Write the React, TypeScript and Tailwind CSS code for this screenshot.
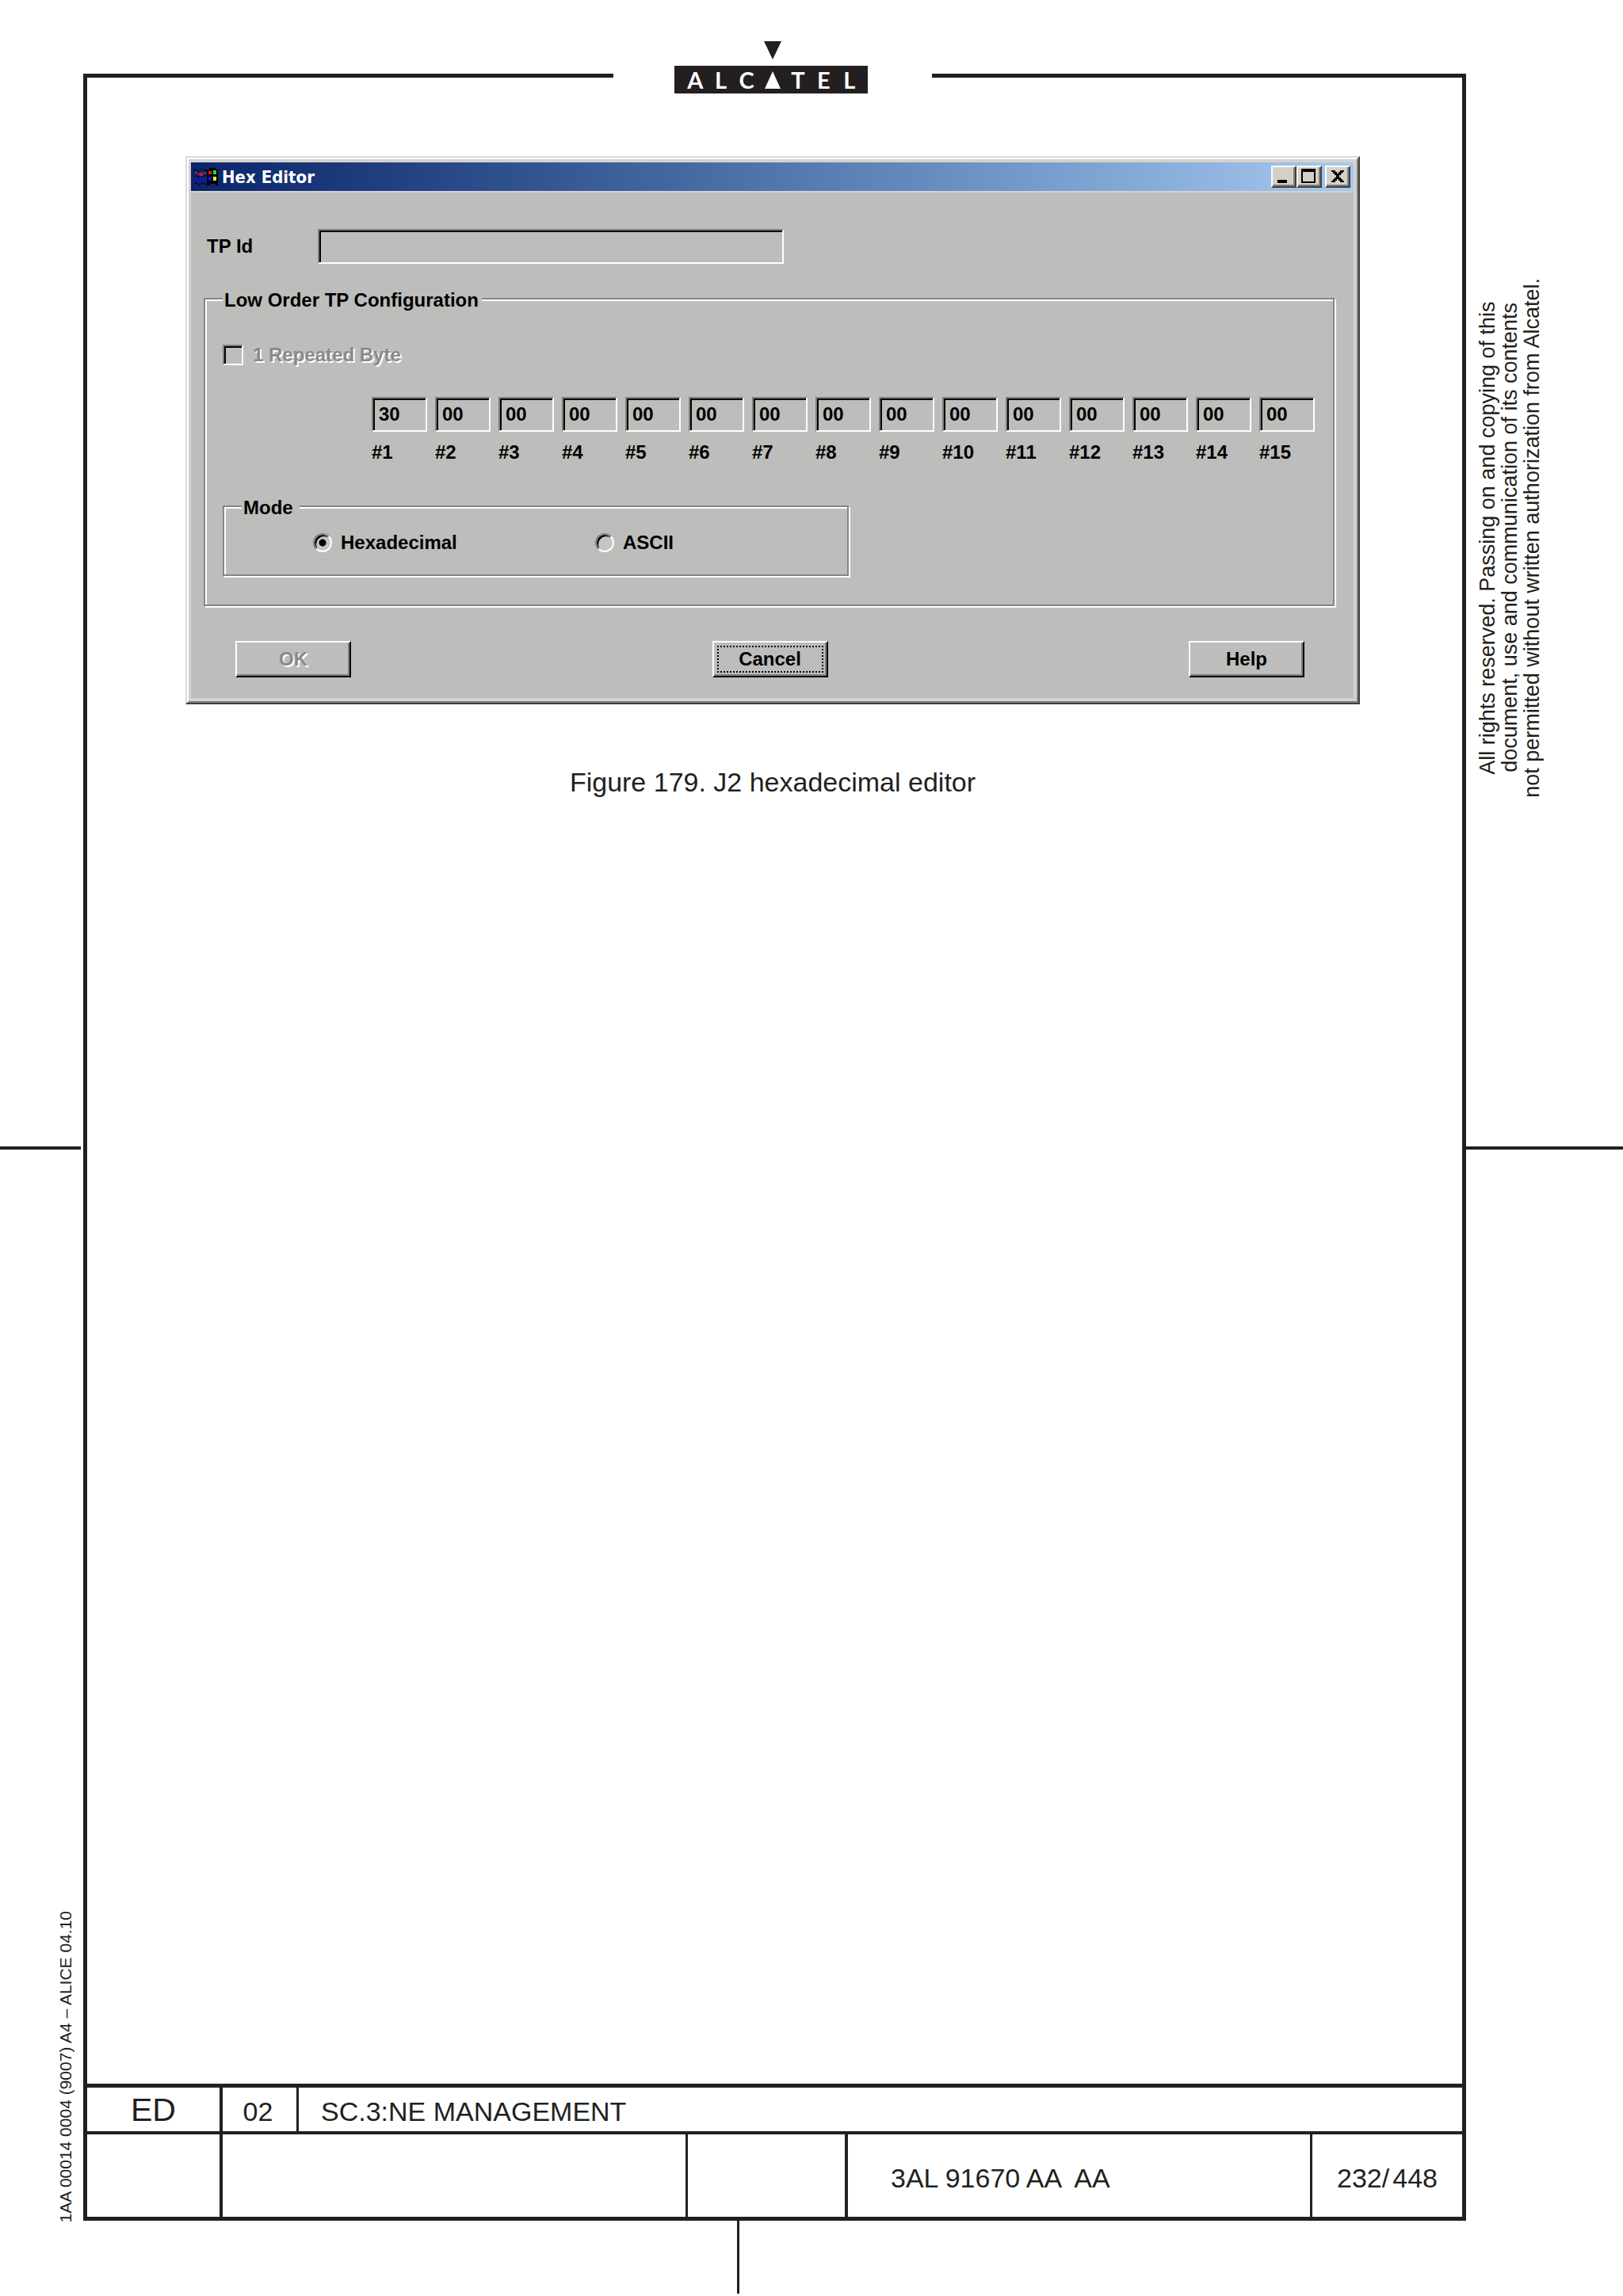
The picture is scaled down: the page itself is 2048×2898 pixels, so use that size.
import { useState } from "react";
import type { ReactNode } from "react";

const initialBytes = ["30", ...Array(14).fill("00")] as string[];

const sunken =
  "border-2 border-t-[#808080] border-l-[#808080] border-r-white border-b-white shadow-[inset_2px_2px_0_#000] bg-transparent";
const group =
  "border-2 border-[#868686] shadow-[2px_2px_0_#fff,inset_2px_2px_0_#fff]";
const engraved = "text-[#8a8a8a] [text-shadow:2px_2px_0_#fff]";

function Logo() {
  return (
    <div className="flex flex-col items-center pt-[52px]">
      <svg width="22" height="23" viewBox="0 0 22 23" className="ml-1">
        <path d="M0 0H22L11 23Z" fill="#231f20" />
      </svg>
      <div className="mt-2 grid h-[35px] w-[244px] grid-cols-7 items-center justify-items-center bg-[#231f20] pr-[7px] pl-[10px] font-[Lato,sans-serif] text-[29px] leading-[35px] font-bold text-white">
        <span>A</span>
        <span>L</span>
        <span>C</span>
        <svg width="20" height="22" viewBox="0 0 20 22">
          <path d="M10 0L20 22H0Z" fill="#fff" />
        </svg>
        <span>T</span>
        <span>E</span>
        <span>L</span>
      </div>
    </div>
  );
}

function WindowsFlag() {
  return (
    <svg width="32" height="26" viewBox="0 0 32 26" shapeRendering="crispEdges">
      <path d="M17 4h3V2h8v2h3v20h-3v-2h-7v2h-4z" fill="#000" />
      <path d="M19 6h4v4h-4z" fill="#f01818" />
      <path d="M25 5h4v5h-4z" fill="#20e020" />
      <path d="M19 13h4v5h-4z" fill="#1010f0" />
      <path d="M25 13h4v5h-4z" fill="#f8e820" />
      <path
        d="M1 3h2v2H1zM5 5h2v2H5zM9 3h2v2H9zM13 4h3v3h-3zM1 11h2v2H1zM5 12h3v2H5zM10 12h2v2h-2zM14 11h2v2h-2z"
        fill="#08081c"
      />
      <path d="M2 7h3v2H2zM6 9h2v2H6zM8 8h4v4H8zM13 7h3v2h-3z" fill="#c81838" />
      <path d="M1 15h4v2H1zM5 16h4v3H5zM9 17h4v2H9zM12 15h4v3h-4z" fill="#0c0cd8" />
      <path d="M2 20h3v2H2zM7 22h2v2H7zM10 20h2v2h-2zM13 21h3v2h-3z" fill="#08081c" />
    </svg>
  );
}

function TitleButton({ label, children }: { label: string; children: ReactNode }) {
  return (
    <button
      type="button"
      aria-label={label}
      className="flex h-7 w-8 items-center justify-center border-2 border-t-white border-l-white border-r-[#404040] border-b-[#404040] bg-[#d4d0c8] shadow-[inset_-2px_-2px_0_#808080]"
    >
      <svg width="24" height="20" viewBox="0 0 24 20" shapeRendering="crispEdges">
        {children}
      </svg>
    </button>
  );
}

function DialogButton({
  children,
  disabled,
  focused,
}: {
  children: ReactNode;
  disabled?: boolean;
  focused?: boolean;
}) {
  return (
    <button
      type="button"
      disabled={disabled}
      className={`flex h-[46px] w-[146px] border-2 border-t-white border-l-white border-r-black border-b-black p-1 shadow-[inset_-2px_-2px_0_#808080] ${
        disabled ? engraved : ""
      }`}
    >
      <span
        className={`flex h-full w-full items-center justify-center ${
          focused ? "border-2 border-dotted border-black" : ""
        }`}
      >
        {children}
      </span>
    </button>
  );
}

function HexEditor() {
  const [bytes, setBytes] = useState(initialBytes);
  const [mode, setMode] = useState("Hexadecimal");

  const setByte = (index: number, value: string) => {
    setBytes(bytes.map((b, i) => (i === index ? value : b)));
  };

  return (
    <div className="border-2 border-t-[#dcdad6] border-l-[#dcdad6] border-r-[#404040] border-b-[#404040]">
      <div className="border-2 border-t-white border-l-white border-r-[#808080] border-b-[#808080] bg-[#d4d2ce] p-1 pl-[3px]">
        <div className="flex h-9 items-center bg-linear-to-r from-[#0a246a] to-[#a6caf0] pr-1 pl-[3px]">
          <WindowsFlag />
          <span className="flex-1 pt-[2px] pl-1 font-['DejaVu_Sans_Condensed','DejaVu_Sans',sans-serif] text-[22px] leading-6 font-bold text-white">
            Hex Editor
          </span>
          <TitleButton label="Minimize">
            <path d="M4 14h12v4H4z" />
          </TitleButton>
          <TitleButton label="Maximize">
            <path d="M2 0h18v18H2zM4 4v12h14V4z" fillRule="evenodd" />
          </TitleButton>
          <span className="w-1" />
          <TitleButton label="Close">
            <path d="M4 2h5v2h2v2h2V4h2V2h5v2h-2v2h-2v2h-2v3h2v2h2v2h2v2h-5v-2h-2v-2h-2v2H9v2H4v-2h2v-2h2v-2h2V8H8V6H6V4H4z" />
          </TitleButton>
        </div>

        <form className="mt-[2px] bg-[#bdbdbb] pr-6 pb-[26px] pl-4 text-[24px] leading-7 font-bold">
          <div className="flex items-center pt-[46px] pl-1">
            <label htmlFor="tp-id" className="w-[140px]">
              TP Id
            </label>
            <input id="tp-id" type="text" className={`h-11 w-[588px] px-2 ${sunken}`} />
          </div>

          <fieldset className={`mt-7 pr-[23px] pb-9 pl-[22px] ${group}`}>
            <legend className="bg-[#bdbdbb] pt-1 pr-1 pl-[2px]">
              Low Order TP Configuration
            </legend>
            <div className="mt-[41px] flex items-center gap-3">
              <input
                id="repeated"
                type="checkbox"
                disabled
                className={`size-[26px] appearance-none ${sunken}`}
              />
              <label htmlFor="repeated" className={engraved}>
                1 Repeated Byte
              </label>
            </div>

            <div className="mt-[39px] flex justify-end gap-[10px]">
              {bytes.map((value, i) => (
                <div key={i} className="flex w-[70px] flex-col gap-3">
                  <input
                    id={`byte-${i + 1}`}
                    type="text"
                    maxLength={2}
                    value={value}
                    onChange={(e) => setByte(i, e.target.value)}
                    className={`h-11 w-full px-[7px] ${sunken}`}
                  />
                  <label htmlFor={`byte-${i + 1}`}>#{i + 1}</label>
                </div>
              ))}
            </div>

            <fieldset className={`mt-[38px] w-[790px] pb-[26px] pl-[112px] ${group}`}>
              <legend className="-ml-[90px] bg-[#bdbdbb] pt-1 pr-2 pl-[2px]">Mode</legend>
              <div className="mt-4 flex">
                {["Hexadecimal", "ASCII"].map((name) => (
                  <label key={name} className="flex w-[356px] items-center gap-[11px] last:w-auto">
                    <input
                      type="radio"
                      name="mode"
                      value={name}
                      checked={mode === name}
                      onChange={() => setMode(name)}
                      className="size-6 appearance-none rounded-full border-2 border-t-[#808080] border-l-[#808080] border-r-white border-b-white bg-[#c6c6c4] shadow-[inset_2px_2px_0_#000] checked:bg-[radial-gradient(circle,#000_4px,transparent_5px)]"
                    />
                    {name}
                  </label>
                ))}
              </div>
            </fieldset>
          </fieldset>

          <div className="mt-11 flex justify-between pr-[38px] pl-10">
            <DialogButton disabled>OK</DialogButton>
            <DialogButton focused>Cancel</DialogButton>
            <DialogButton>Help</DialogButton>
          </div>
        </form>
      </div>
    </div>
  );
}

function TitleBlock() {
  return (
    <div className="border-y-5 border-[#231f20] text-[34px] leading-[38px]">
      <div className="flex h-[59px] border-b-4 border-[#231f20]">
        <div className="flex w-[171px] items-center justify-center border-r-4 border-[#231f20] text-[41px]">
          ED
        </div>
        <div className="flex w-24 items-center justify-center border-r-3 border-[#231f20] pt-1 pr-1">
          02
        </div>
        <div className="flex flex-1 items-center pt-1 pl-7">SC.3:NE MANAGEMENT</div>
      </div>
      <div className="flex h-[104px]">
        <div className="w-[171px] border-r-4 border-[#231f20]" />
        <div className="flex-1 border-r-3 border-[#231f20]" />
        <div className="w-[202px] border-r-4 border-[#231f20]" />
        <div className="flex w-[586px] items-center border-r-3 border-[#231f20] pt-[6px] pl-[54px] whitespace-pre">
          3AL 91670 AA  AA
        </div>
        <div className="flex w-[189px] items-center justify-center gap-1 pt-[6px]">
          <span>232/</span>
          <span>448</span>
        </div>
      </div>
    </div>
  );
}

export default function App() {
  return (
    <div className="flex min-h-screen bg-white font-['Liberation_Sans',Arial,sans-serif] text-[#231f20]">
      <aside className="flex w-[105px] flex-col">
        <div className="flex-1" />
        <div className="mr-[3px] h-1 bg-[#231f20]" />
        <div className="flex flex-1 items-end justify-end">
          <p className="mr-[10px] mb-[93px] rotate-180 text-[21px] leading-6 whitespace-nowrap [writing-mode:vertical-rl]">
            1AA 00014 0004 (9007) A4 – ALICE 04.10
          </p>
        </div>
      </aside>

      <main className="flex flex-1 flex-col">
        <header className="flex">
          <div className="mt-[93px] flex-[669] border-t-5 border-l-5 border-[#231f20]" />
          <div className="pr-[81px] pl-[77px]">
            <Logo />
          </div>
          <div className="mt-[93px] flex-[674] border-t-5 border-r-5 border-[#231f20]" />
        </header>
        <div className="flex flex-1 flex-col border-x-5 border-[#231f20]">
          <figure className="flex-1 pt-[79px] pr-[129px] pl-[124px] text-black">
            <HexEditor />
            <figcaption className="mt-[79px] text-center text-[34px] leading-[38px] text-[#231f20]">
              Figure 179. J2 hexadecimal editor
            </figcaption>
          </figure>
          <TitleBlock />
        </div>
        <div className="flex h-[95px] pb-[3px] pl-[825px]">
          <div className="w-[3px] bg-[#231f20]" />
        </div>
      </main>

      <aside className="flex w-[198px] flex-col">
        <div className="flex flex-1 items-start">
          <p className="mt-[351px] ml-[13px] rotate-180 text-center text-[27px] leading-7 whitespace-nowrap [writing-mode:vertical-rl]">
            All rights reserved. Passing on and copying of this
            <br />
            document, use and communication of its contents
            <br />
            not permitted without written authorization from Alcatel.
          </p>
        </div>
        <div className="h-1 bg-[#231f20]" />
        <div className="flex-1" />
      </aside>
    </div>
  );
}
